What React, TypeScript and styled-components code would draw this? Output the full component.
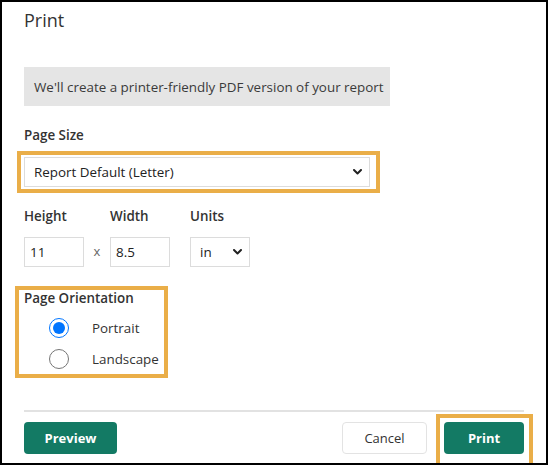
import { FC } from 'react';
import styled, { createGlobalStyle } from 'styled-components';

const GlobalStyle = createGlobalStyle`
  html, body {
    margin: 0;
    padding: 0;
    background: #fff;
  }
  * {
    box-sizing: border-box;
  }
`;

const Dialog = styled.div`
  width: 548px;
  height: 465px;
  border: 2px solid #000;
  padding: 6px 22px 9px 22px;
  overflow: hidden;
  font-family: 'Open Sans', 'Noto Sans', sans-serif;
  font-size: 13.4px;
  color: #333;
  display: flex;
  flex-direction: column;

  & > * {
    flex-shrink: 0;
  }
`;

const Title = styled.h1`
  margin: 0;
  height: 24px;
  line-height: 24px;
  font-size: 18px;
  font-weight: 400;
  color: #333;
`;

const Notice = styled.div`
  margin-top: 35px;
  width: 366px;
  height: 39px;
  padding: 0 10px;
  display: flex;
  align-items: center;
  background: #e5e5e5;
  color: #3a3a3a;
  white-space: nowrap;
`;

const Label = styled.div<{ $top?: number }>`
  margin-top: ${p => p.$top ?? 0}px;
  line-height: 20px;
  font-weight: 600;
  color: #333;
`;

const Highlight = styled.div`
  border: 4px solid #eaae48;
`;

const SizeHighlight = styled(Highlight)`
  margin: 6px 0 0 -7px;
  width: 363px;
  padding: 2px 6px 2px 3px;
`;

const SelectWrap = styled.div<{ $width: number }>`
  position: relative;
  width: ${p => p.$width}px;
  height: 30px;
`;

const Select = styled.select<{ $pad: number }>`
  appearance: none;
  width: 100%;
  height: 100%;
  border: 1px solid #dcdcdc;
  border-radius: 0;
  background: #fff;
  padding: 0 24px 0 ${p => p.$pad}px;
  font-family: inherit;
  font-size: 13.4px;
  color: #222;
  outline: none;
`;

const Chevron = styled.svg<{ $right: number }>`
  position: absolute;
  right: ${p => p.$right}px;
  top: 12px;
  width: 9px;
  height: 6px;
  pointer-events: none;
`;

const DimGrid = styled.div`
  margin-top: 13px;
  display: grid;
  grid-template-columns: 60px 26px 60px 20px 60px;
  grid-template-rows: 20px 30px;
  row-gap: 11px;
  align-items: center;
`;

const DimLabel = styled.div<{ $col: number }>`
  grid-column: ${p => p.$col};
  grid-row: 1;
  line-height: 20px;
  font-weight: 600;
  color: #333;
`;

const Times = styled.span`
  grid-column: 2;
  grid-row: 2;
  text-align: center;
  color: #666;
  font-size: 13px;
  padding-bottom: 3px;
`;

const TextInput = styled.input<{ $col: number }>`
  grid-column: ${p => p.$col};
  grid-row: 2;
  width: 60px;
  height: 30px;
  border: 1px solid #dcdcdc;
  padding: 0 5px;
  font-family: inherit;
  font-size: 13.4px;
  color: #222;
  outline: none;
`;

const UnitsCell = styled.div`
  grid-column: 5;
  grid-row: 2;
`;

const OrientationHighlight = styled(Highlight)`
  margin: 19px 0 0 -9px;
  width: 153px;
  height: 92px;
  padding: 0 0 0 5px;
`;

const OrientationLabel = styled.div`
  line-height: 16px;
  font-weight: 600;
  color: #333;
`;

const RadioList = styled.div`
  margin-top: 6px;
  display: flex;
  flex-direction: column;
`;

const RadioRow = styled.label`
  height: 31px;
  display: flex;
  align-items: center;
  padding-left: 25px;
  gap: 23px;
  color: #333;
`;

const Radio = styled.input`
  width: 20px;
  height: 20px;
  margin: 0;
`;

const Footer = styled.div`
  margin-top: 32px;
  border-top: 2px solid #e2e2e2;
  padding-top: 10px;
  display: flex;
  align-items: flex-start;
`;

const Button = styled.button<{ $variant?: 'primary' | 'secondary'; $width: number }>`
  width: ${p => p.$width}px;
  height: 32px;
  border-radius: 4px;
  font-family: inherit;
  font-size: 13px;
  font-weight: 700;
  cursor: pointer;
  ${p =>
    p.$variant === 'secondary'
      ? `
    background: #fff;
    color: #333;
    border: 1px solid #e3e3e3;
    font-weight: 500;
  `
      : `
    background: #137a64;
    color: #fff;
    border: none;
  `}
`;

const Spacer = styled.div`
  flex: 1;
`;

const PrintHighlight = styled(Highlight)`
  margin: -8px -9px 0 9px;
  padding: 4px 5px 20px 4px;
`;

const ChevronIcon: FC<{ right: number }> = ({ right }) => (
  <Chevron $right={right} viewBox="0 0 9 6">
    <path d="M1 1 L4.5 4.5 L8 1" fill="none" stroke="#222" strokeWidth="2" strokeLinecap="round" strokeLinejoin="round" />
  </Chevron>
);

const App: FC = () => (
  <>
    <GlobalStyle />
    <Dialog>
      <Title>Print</Title>
      <Notice>We'll create a printer-friendly PDF version of your report</Notice>

      <Label $top={19}>Page Size</Label>
      <SizeHighlight>
        <SelectWrap $width={346}>
          <Select $pad={9} defaultValue="letter">
            <option value="letter">Report Default (Letter)</option>
          </Select>
          <ChevronIcon right={8} />
        </SelectWrap>
      </SizeHighlight>

      <DimGrid>
        <DimLabel $col={1}>Height</DimLabel>
        <DimLabel $col={3}>Width</DimLabel>
        <DimLabel $col={5}>Units</DimLabel>
        <TextInput $col={1} defaultValue="11" />
        <Times>x</Times>
        <TextInput $col={3} defaultValue="8.5" />
        <UnitsCell>
          <SelectWrap $width={60}>
            <Select $pad={9} defaultValue="in">
              <option value="in">in</option>
            </Select>
            <ChevronIcon right={8} />
          </SelectWrap>
        </UnitsCell>
      </DimGrid>

      <OrientationHighlight>
        <OrientationLabel>Page Orientation</OrientationLabel>
        <RadioList>
          <RadioRow>
            <Radio type="radio" name="orientation" defaultChecked />
            Portrait
          </RadioRow>
          <RadioRow>
            <Radio type="radio" name="orientation" />
            Landscape
          </RadioRow>
        </RadioList>
      </OrientationHighlight>

      <Footer>
        <Button $width={93}>Preview</Button>
        <Spacer />
        <Button $variant="secondary" $width={85}>
          Cancel
        </Button>
        <PrintHighlight>
          <Button $width={80}>Print</Button>
        </PrintHighlight>
      </Footer>
    </Dialog>
  </>
);

export default App;
